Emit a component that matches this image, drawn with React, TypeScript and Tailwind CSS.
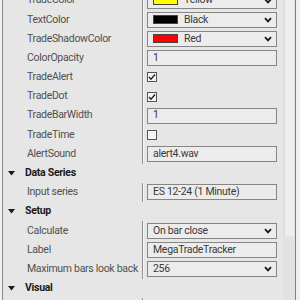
import React from "react";

type Row =
  | { kind: "header"; label: string }
  | { kind: "color"; label: string; color: string; text: string }
  | { kind: "input"; label: string; value: string }
  | { kind: "check"; label: string; checked: boolean }
  | { kind: "select"; label: string; value: string }
  | { kind: "blank"; label: string };

const rows: Row[] = [
  { kind: "color", label: "TradeColor", color: "#ffff00", text: "Yellow" },
  { kind: "color", label: "TextColor", color: "#000000", text: "Black" },
  { kind: "color", label: "TradeShadowColor", color: "#ff0000", text: "Red" },
  { kind: "input", label: "ColorOpacity", value: "1" },
  { kind: "check", label: "TradeAlert", checked: true },
  { kind: "check", label: "TradeDot", checked: true },
  { kind: "input", label: "TradeBarWidth", value: "1" },
  { kind: "check", label: "TradeTime", checked: false },
  { kind: "input", label: "AlertSound", value: "alert4.wav" },
  { kind: "header", label: "Data Series" },
  { kind: "input", label: "Input series", value: "ES 12-24 (1 Minute)" },
  { kind: "header", label: "Setup" },
  { kind: "select", label: "Calculate", value: "On bar close" },
  { kind: "input", label: "Label", value: "MegaTradeTracker" },
  { kind: "select", label: "Maximum bars look back", value: "256" },
  { kind: "header", label: "Visual" },
  { kind: "blank", label: "" },
];

const Chevron = () => (
  <svg width="8" height="6" viewBox="0 0 8 6" className="shrink-0">
    <polyline points="1,1.2 4,4.4 7,1.2" fill="none" stroke="#1a1a1a" strokeWidth="1.8" />
  </svg>
);

const Box = ({ children }: { children: React.ReactNode }) => (
  <div className="h-[16px] w-[130px] border border-[#858585] bg-[#ececec] flex items-center pl-[5px] pr-[4px] text-[#3a3a3a]">
    {children}
  </div>
);

function Value({ row }: { row: Row }) {
  switch (row.kind) {
    case "color":
      return (
        <Box>
          <div className="w-[25px] h-[9px] border border-[#444] shrink-0" style={{ backgroundColor: row.color }} />
          <span className="ml-[6px] flex-1 leading-none">{row.text}</span>
          <Chevron />
        </Box>
      );
    case "input":
      return (
        <Box>
          <span className="flex-1 leading-none">{row.value}</span>
        </Box>
      );
    case "select":
      return (
        <Box>
          <span className="flex-1 leading-none">{row.value}</span>
          <Chevron />
        </Box>
      );
    case "check":
      return (
        <div className="w-[10px] h-[10px] border border-[#555] bg-[#f4f4f4] flex items-center justify-center">
          {row.checked && (
            <svg width="8" height="8" viewBox="0 0 8 8">
              <polyline points="1,4 3,6.2 7,1.5" fill="none" stroke="#222" strokeWidth="1.4" />
            </svg>
          )}
        </div>
      );
    default:
      return null;
  }
}

export default function App() {
  return (
    <div
      className="w-[300px] h-[300px] overflow-hidden bg-[#e6e6e6] flex text-[10.5px] tracking-[-0.3px]"
      style={{ fontFamily: '"Segoe UI", Roboto, "Noto Sans", sans-serif' }}
    >
      <div className="w-[2px] bg-[#f0f0f0] shrink-0" />
      <div className="w-[1px] bg-[#8a8a8a] shrink-0" />
      <div className="w-[280px] shrink-0 flex flex-col mt-[-9px]">
        {rows.map((row, i) =>
          row.kind === "header" ? (
            <div key={i} className="h-[19.2px] shrink-0 flex items-center">
              <svg width="7" height="5" viewBox="0 0 7 5" className="ml-[5px]">
                <polygon points="0,0 7,0 3.5,4.5" fill="#1a1a1a" />
              </svg>
              <span className="ml-[10px] font-bold text-[#1a1a1a] leading-none">{row.label}</span>
            </div>
          ) : (
            <div key={i} className="h-[19.2px] shrink-0 flex">
              <div className="w-[139px] shrink-0 flex items-center pl-[24px] text-[#505050] leading-none whitespace-nowrap">
                {row.label}
              </div>
              <div className="w-[1px] bg-[#8f8f8f] shrink-0" />
              <div className="w-[1px] bg-[#f3f3f3] shrink-0" />
              <div className="flex-1 flex items-center pl-[3px]">
                <Value row={row} />
              </div>
            </div>
          )
        )}
      </div>
      <div className="w-[12px] shrink-0 flex flex-col bg-[#e2e2e2]">
        <div className="h-[236px] ml-[1px] w-[10px] bg-[#eeeeee] border-l border-[#d8d8d8]" />
      </div>
      <div className="w-[1px] bg-[#7f7f7f] shrink-0" />
      <div className="flex-1 bg-[#efefef]" />
    </div>
  );
}
